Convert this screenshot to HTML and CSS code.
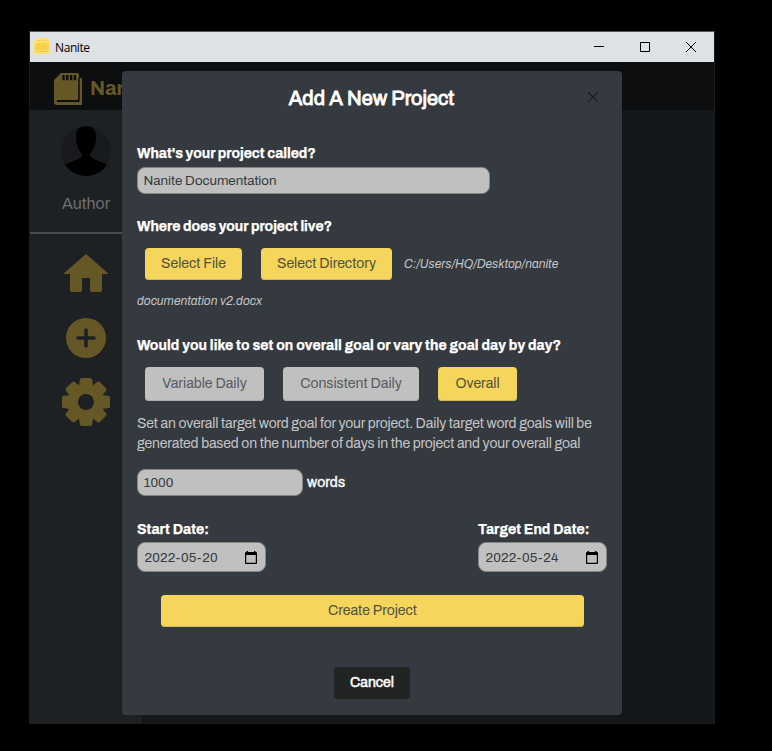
FILE: index.html
```
<!DOCTYPE html>
<html lang="en">
<head>
<meta charset="utf-8">
<title>Nanite</title>
<link rel="stylesheet" href="styles.css">
</head>
<body>
<div class="window">
  <div class="titlebar">
    <svg class="app-icon" width="16" height="16" viewBox="0 0 16 16"><path fill="#ffe06a" d="M4 0h10v2h2v14H0V3z"/><path fill="#f7d14e" d="M3 5h10v7H1V7z"/><path stroke="#d8c27a" stroke-dasharray="1 1" d="M5 2.500h7"/><path stroke="#f0cb4c" fill="none" d="M2 13.500h12V4"/></svg>
    <span class="app-name">Nanite</span>
    <div class="controls">
      <svg width="10" height="10" viewBox="0 0 10 10"><path d="M0 4.500h10"/></svg>
      <svg width="10" height="10" viewBox="0 0 10 10"><path d="M.5.5h9v9h-9z"/></svg>
      <svg width="10" height="10" viewBox="0 0 10 10"><path d="M0 0l10 10M10 0L0 10"/></svg>
    </div>
  </div>
  <header class="brand">
    <svg width="28" height="32" viewBox="0 0 28 32"><path fill="#665826" fill-rule="evenodd" d="M7 0h16q2 0 2 2v3h3v27H3q-3 0-3-3V7zM8.300 2v5.300h2.400V2zm3.800 0v5.300h2.400V2zm3.800 0v5.300h2.400V2zm3.800 0v5.300h2.400V2zM24.200 5v20.500q0 1.500-1.500 1.500H3.500q-.8 0-.8.900 0 1.100 1 1.100H24.500q1.200 0 1.200-1.200V5z"/></svg>
    <span>Nanite</span>
  </header>
  <div class="body">
    <nav class="sidebar">
      <svg class="avatar" width="50" height="50" viewBox="0 0 50 50"><defs><clipPath id="disc"><circle cx="25" cy="25" r="25"/></clipPath></defs><circle cx="25" cy="25" r="25" fill="#181a1e"/><path clip-path="url(#disc)" d="M25 0c7 0 10 4 10 11 0 8-2.500 13-6 17 0 3 2 4.500 6 6 5 2 9 3.500 12 5V50H3V39c3-1.500 7-3 12-5 4-1.500 6-3 6-6-3.500-4-6-9-6-17C15 4 18 0 25 0z"/></svg>
      <span class="author">Author</span>
      <svg class="home" width="44" height="38" viewBox="0 0 44 38"><path d="M22 0l22 19.300V20h-6v16q0 2-2 2h-8q-2 0-2-2V24h-8v12q0 2-2 2H8q-2 0-2-2V20H0v-.7z"/></svg>
      <svg class="add" width="40" height="40" viewBox="0 0 40 40"><circle cx="20" cy="20" r="20"/><path d="M20 12v16M12 20h16"/></svg>
      <svg class="gear" width="48" height="48" viewBox="-24 -24 48 48"><defs><path id="tooth" d="M-7-16l1-7q.2-.7 1-.8 5-.5 10 0 .8.100 1 .8l1 7z"/></defs><path fill-rule="evenodd" d="M0-18a18 18 0 1 0 .01 0zM0-8a8 8 0 1 1-.01 0z"/><use href="#tooth"/><use href="#tooth" transform="rotate(45)"/><use href="#tooth" transform="rotate(90)"/><use href="#tooth" transform="rotate(135)"/><use href="#tooth" transform="rotate(180)"/><use href="#tooth" transform="rotate(225)"/><use href="#tooth" transform="rotate(270)"/><use href="#tooth" transform="rotate(315)"/></svg>
    </nav>
    <main></main>
  </div>

  <form class="modal">
    <div class="modal-head">
      <h1>Add A New Project</h1>
      <svg class="close" width="10" height="10" viewBox="0 0 10 10"><path d="M0 0l10 10M10 0L0 10"/></svg>
    </div>
    <label class="question called">What's your project called?</label>
    <div class="field name">Nanite Documentation</div>
    <label class="question where">Where does your project live?</label>
    <div class="location">
      <span class="btn file">Select File</span>
      <span class="btn dir">Select Directory</span>
      <em>C:/Users/HQ/Desktop/nanite</em>
    </div>
    <em class="rest">documentation v2.docx</em>
    <label class="question goal">Would you like to set on overall goal or vary the goal day by day?</label>
    <div class="modes">
      <span class="btn off variable">Variable Daily</span>
      <span class="btn off consistent">Consistent Daily</span>
      <span class="btn overall">Overall</span>
    </div>
    <p class="hint">Set an overall target word goal for your project. Daily target word goals will be generated based on the number of days in the project and your overall goal</p>
    <div class="words"><div class="field count">1000</div><span>words</span></div>
    <div class="dates">
      <div>
        <label class="question start">Start Date:</label>
        <div class="field date"><span>2022-05-20</span><svg width="12" height="13" viewBox="0 0 12 13"><path fill-rule="evenodd" d="M1.500 0H3v1h6V0h1.500v1H11q1 0 1 1v10q0 1-1 1H1q-1 0-1-1V2q0-1 1-1h.5zM1.200 4v7.800h9.600V4z"/></svg></div>
      </div>
      <div>
        <label class="question end">Target End Date:</label>
        <div class="field date"><span>2022-05-24</span><svg width="12" height="13" viewBox="0 0 12 13"><path fill-rule="evenodd" d="M1.500 0H3v1h6V0h1.500v1H11q1 0 1 1v10q0 1-1 1H1q-1 0-1-1V2q0-1 1-1h.5zM1.200 4v7.800h9.600V4z"/></svg></div>
      </div>
    </div>
    <span class="btn create">Create Project</span>
    <span class="cancel">Cancel</span>
  </form>
</div>
</body>
</html>
```
FILE: styles.css
```
* { box-sizing: border-box; }
body {
  margin: 0;
  height: 751px;
  overflow: hidden;
  padding: 31px 0 0 29px;
  background: #000;
  font-family: Archivo, "Liberation Sans", Arial, sans-serif;
  font-size: 14px;
}
svg { display: block; flex: none; }

.window {
  position: relative;
  display: flex;
  flex-direction: column;
  width: 686px;
  height: 693px;
  border: 1px solid #1b1d1f;
  border-top-color: #55575a;
}
.titlebar {
  display: flex;
  align-items: center;
  height: 30px;
  padding: 0 18px 0 4px;
  background: #dee1e6;
}
.app-icon { margin-top: -2px; }
.app-name {
  margin-left: 5px;
  font: 12px "Open Sans", "Noto Sans", sans-serif;
  letter-spacing: -0.4px;
  color: #000;
}
.controls { display: flex; gap: 36px; margin: -1px 0 0 auto; }
.controls path { fill: none; stroke: #000; }

.brand {
  display: flex;
  align-items: center;
  gap: 8px;
  height: 48px;
  padding: 5px 0 0 24px;
  background: #0d0e10;
  color: #665826;
  font-size: 20px;
  font-weight: bold;
}
.brand svg { margin-top: 0; }
.brand span { margin-top: -1px; letter-spacing: -0.1px; }
.body { display: flex; flex: 1; }
.sidebar {
  display: flex;
  flex-direction: column;
  align-items: center;
  width: 112px;
  padding-top: 16px;
  background: #1d2124;
  fill: #665826;
}
.avatar { fill: #000; }
.author {
  display: flex;
  align-items: center;
  justify-content: center;
  width: 112px;
  height: 58px;
  padding-bottom: 2px;
  margin-bottom: 20px;
  border-bottom: 2px solid #4a4a4a;
  color: #6e6f71;
  font-size: 16px;
}
.add { margin: 26px 0 20px; }
.add path { stroke: #1d2124; stroke-width: 3.6; stroke-linecap: round; }
main { flex: 1; background: #14181b; }

.modal {
  position: absolute;
  left: 92px;
  top: 39px;
  display: flex;
  flex-direction: column;
  width: 500px;
  height: 644px;
  padding: 0 15px;
  border-radius: 4px;
  background: #343a40;
}
.modal-head {
  display: flex;
  align-items: center;
  justify-content: flex-end;
  height: 54px;
  padding-right: 9px;
}
h1 {
  flex: 1;
  margin: 0 0 0 32px;
  padding-right: 14px;
  text-align: center;
  color: #fff;
  font-size: 20px;
  font-weight: normal;
  -webkit-text-stroke: 0.9px #fff;
}
.close { margin-top: -2px; fill: none; stroke: #1c1f22; stroke-width: 1.2; }
.question {
  display: block;
  height: 20px;
  line-height: 22px;
  white-space: nowrap;
  color: #fff;
  font-weight: bold;
  -webkit-text-stroke: 0.25px #fff;
}
.called { margin-top: 18px; letter-spacing: -0.04px; }
.where { margin-top: 22px; letter-spacing: -0.03px; }
.goal { margin-top: 16px; letter-spacing: 0.07px; }
.start { letter-spacing: 0.06px; }
.end { letter-spacing: 0.04px; }
.field {
  display: flex;
  align-items: center;
  height: 27px;
  padding: 0 5.500px;
  border: 1px solid #858585;
  border-radius: 8px;
  background: #c0c0c0;
  color: #343a40;
  font-size: 13.33px;
}
.name { width: 353px; margin-top: 4px; }
.btn {
  display: flex;
  align-items: center;
  justify-content: center;
  height: 32px;
  padding-bottom: 1px;
  border-radius: 4px;
  background: #f5d55c;
  color: #50513f;
  box-shadow: inset 0 -1px #d3ba58;
}
.location { display: flex; align-items: center; margin-top: 12px; }
.file { width: 97px; margin: 0 19px 0 8px; }
.dir { width: 131px; margin-right: 12px; }
em { color: #c4c5c7; font-size: 12px; }
.rest { height: 39px; line-height: 42px; }
.modes { display: flex; gap: 19px; margin: 12px 0 0 8px; }
.modes .btn { height: 34px; }
.off { background: #c0c0c0; color: #565b60; box-shadow: inset 0 -1px #acacac; }
.variable { width: 119px; }
.consistent { width: 136px; }
.overall { width: 79px; }
.hint {
  margin: 13px 0 15px;
  line-height: 20px;
  letter-spacing: -0.17px;
  color: #c4c5c7;
}
.words { display: flex; align-items: center; gap: 4px; }
.words span { color: #fff; letter-spacing: 0.1px; -webkit-text-stroke: 0.4px #fff; }
.count { width: 166px; }
.dates { display: flex; justify-content: space-between; margin-top: 23px; }
.dates > div { width: 129px; }
.date {
  justify-content: space-between;
  height: 30px;
  margin-top: 3px;
  padding: 0 8px 0 6.500px;
  letter-spacing: 0.2px;
}
.date svg { fill: #000; }
.create { width: 423px; margin: 23px 0 40px 24px; }
.cancel {
  width: 76px;
  height: 32px;
  margin-left: 197px;
  border-radius: 3px;
  background: #212423;
  color: #fff;
  line-height: 32px;
  text-align: center;
  -webkit-text-stroke: 0.5px #fff;
}
```
